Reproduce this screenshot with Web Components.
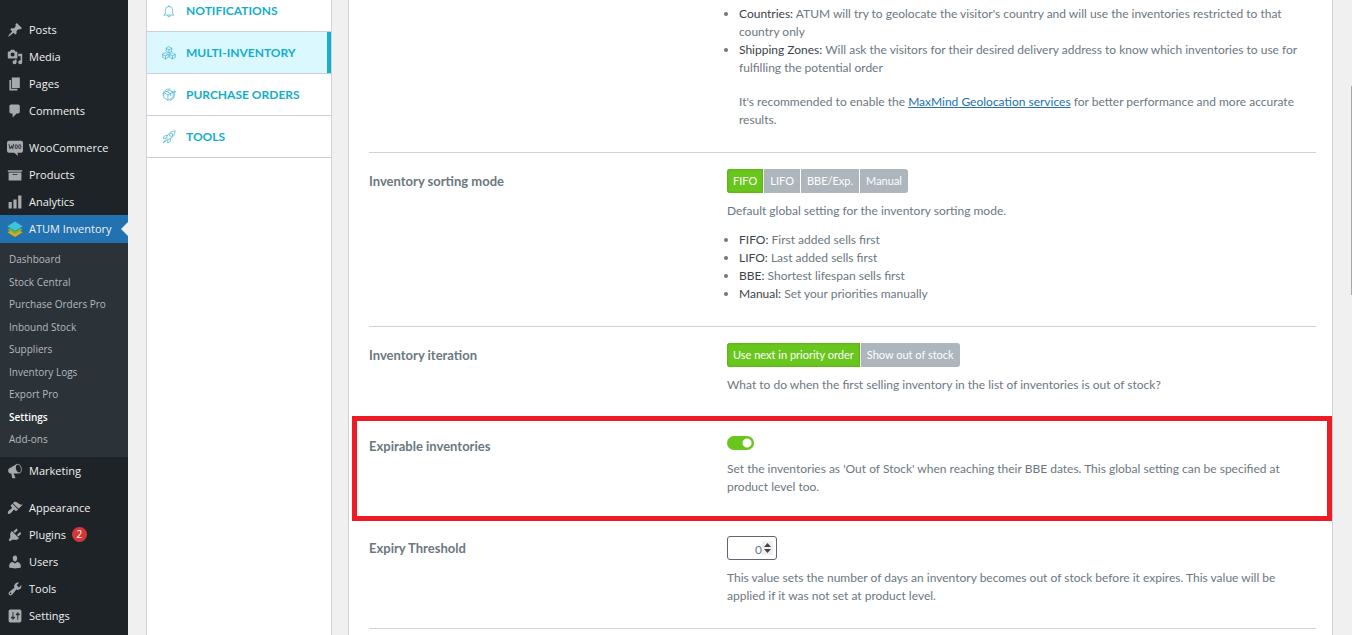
<!DOCTYPE html>
<html lang="en">
<head>
<meta charset="utf-8">
<meta name="viewport" content="width=device-width, initial-scale=1">
<title>ATUM Inventory Settings</title>
<style>
  body { margin: 0; font-family: Lato, "Noto Sans", sans-serif; font-size: 12px; line-height: 18px; color: #6c7781; background: #f0f0f1; }
  strong { font-weight: 400; color: #3c434a; }
  a { color: #2271b1; }
  input::-webkit-inner-spin-button { display: none; }
</style>
</head>
<body>
<atum-app>
  <wp-menu slot="menu">
    <wp-menu-item icon="post">Posts</wp-menu-item>
    <wp-menu-item icon="media">Media</wp-menu-item>
    <wp-menu-item icon="page">Pages</wp-menu-item>
    <wp-menu-item icon="comment">Comments</wp-menu-item>
    <wp-menu-gap></wp-menu-gap>
    <wp-menu-item icon="woo">WooCommerce</wp-menu-item>
    <wp-menu-item icon="archive">Products</wp-menu-item>
    <wp-menu-item icon="chart">Analytics</wp-menu-item>
    <wp-menu-item icon="atum" current>ATUM Inventory</wp-menu-item>
    <wp-submenu items="Dashboard,Stock Central,Purchase Orders Pro,Inbound Stock,Suppliers,Inventory Logs,Export Pro,Settings,Add-ons" current="Settings"></wp-submenu>
    <wp-menu-item icon="megaphone">Marketing</wp-menu-item>
    <wp-menu-gap></wp-menu-gap>
    <wp-menu-item icon="appearance">Appearance</wp-menu-item>
    <wp-menu-item icon="plugins" count="2">Plugins</wp-menu-item>
    <wp-menu-item icon="users">Users</wp-menu-item>
    <wp-menu-item icon="tools">Tools</wp-menu-item>
    <wp-menu-item icon="settings">Settings</wp-menu-item>
  </wp-menu>

  <atum-nav slot="nav">
    <atum-nav-item icon="bell">NOTIFICATIONS</atum-nav-item>
    <atum-nav-item icon="cubes" active>MULTI-INVENTORY</atum-nav-item>
    <atum-nav-item icon="box">PURCHASE ORDERS</atum-nav-item>
    <atum-nav-item icon="rocket">TOOLS</atum-nav-item>
  </atum-nav>

  <atum-setting continued>
    <atum-list>
      <li><strong>Countries:</strong> ATUM will try to geolocate the visitor's country and will use the inventories restricted to that country only</li>
      <li><strong>Shipping Zones:</strong> Will ask the visitors for their desired delivery address to know which inventories to use for fulfilling the potential order
        <atum-note>It's recommended to enable the <a href="#maxmind">MaxMind Geolocation services</a> for better performance and more accurate results.</atum-note></li>
    </atum-list>
  </atum-setting>

  <atum-setting>
    <span slot="label">Inventory sorting mode</span>
    <atum-choice slot="control" label="Inventory sorting mode" options="FIFO,LIFO,BBE/Exp.,Manual" value="FIFO"></atum-choice>
    Default global setting for the inventory sorting mode.
    <atum-list spaced>
      <li><strong>FIFO:</strong> First added sells first</li>
      <li><strong>LIFO:</strong> Last added sells first</li>
      <li><strong>BBE:</strong> Shortest lifespan sells first</li>
      <li><strong>Manual:</strong> Set your priorities manually</li>
    </atum-list>
  </atum-setting>

  <atum-setting>
    <span slot="label">Inventory iteration</span>
    <atum-choice slot="control" label="Inventory iteration" options="Use next in priority order,Show out of stock" value="Use next in priority order"></atum-choice>
    What to do when the first selling inventory in the list of inventories is out of stock?
  </atum-setting>

  <atum-setting highlighted>
    <label slot="label" for="expirable">Expirable inventories</label>
    <atum-switch slot="control"><input type="checkbox" role="switch" id="expirable" checked></atum-switch>
    Set the inventories as 'Out of Stock' when reaching their BBE dates. This global setting can be specified at product level too.
  </atum-setting>

  <atum-setting>
    <label slot="label" for="threshold">Expiry Threshold</label>
    <atum-number slot="control"><input type="number" id="threshold" value="0" min="0"></atum-number>
    This value sets the number of days an inventory becomes out of stock before it expires. This value will be applied if it was not set at product level.
  </atum-setting>
</atum-app>

<script>
const define = (name, render) => customElements.define(name, class extends HTMLElement {
  connectedCallback() {
    if (this.shadowRoot) return;
    this.attachShadow({ mode: 'open' }).innerHTML = render(this);
  }
});

const ICONS = {
  post: '<path d="M10.44 3.02l1.82-1.82 6.36 6.35-1.83 1.82c-1.05-.68-2.48-.57-3.41.36l-.75.75c-.92.93-1.04 2.35-.35 3.41l-1.83 1.82-2.41-2.41-2.8 2.79c-.42.42-3.38 2.71-3.8 2.29s1.86-3.39 2.28-3.81l2.79-2.79L4.1 9.36l1.83-1.82c1.05.69 2.48.57 3.4-.36l.75-.75c.93-.92 1.05-2.35.36-3.41z"/>',
  media: '<path fill-rule="evenodd" d="M13 11V4c0-.55-.45-1-1-1h-1.67L9 1H5L3.67 3H2c-.55 0-1 .45-1 1v7c0 .55.45 1 1 1h10c.55 0 1-.45 1-1zM7 4.5c1.38 0 2.5 1.12 2.5 2.5S8.38 9.5 7 9.5 4.5 8.38 4.5 7 5.62 4.5 7 4.5zM14 6h5v10.5c0 1.38-1.12 2.5-2.5 2.5S14 17.88 14 16.5s1.12-2.5 2.5-2.5c.17 0 .34.02.5.05V9h-3V6zm-4 8.05V13h2v3.5c0 1.38-1.12 2.5-2.5 2.5S7 17.88 7 16.5 8.12 14 9.5 14c.17 0 .34.02.5.05z"/>',
  page: '<path d="M6 15V2h10v13H6zm-1 1h8v2H3V5h2v11z"/>',
  comment: '<path d="M5 2h9c1.1 0 2 .9 2 2v7c0 1.1-.9 2-2 2h-2l-5 5v-5H5c-1.1 0-2-.9-2-2V4c0-1.1.9-2 2-2z"/>',
  woo: '<path d="M2.5 1h15A2.5 2.5 0 0 1 20 3.500v10a2.500 2.500 0 0 1-2.500 2.500H13l1 4-5-4H2.500A2.500 2.500 0 0 1 0 13.500v-10A2.500 2.500 0 0 1 2.500 1z"/><g fill="none" stroke="#3a4046" stroke-width="1.300" stroke-linecap="round" stroke-linejoin="round"><path d="M2.500 5.500l1.300 5.500 2-3.800 1.300 3.800 1.100-5.500"/><ellipse cx="11.500" cy="8.300" rx="1.400" ry="2.400"/><ellipse cx="16" cy="8.300" rx="1.400" ry="2.400"/></g>',
  archive: '<path fill-rule="evenodd" d="M19 4v2H1V4h18zM2 7h16v10H2V7zm11 3V9H7v1h6z"/>',
  chart: '<path d="M18 18V2h-4v16h4zm-6 0V7H8v11h4zm-6 0v-8H2v8h4z"/>',
  atum: '<path fill="#e8a317" d="M.500 14l9.500-5 9.500 5L10 20z"/><path fill="#76b82a" d="M.500 10.500l9.500-5 9.500 5L10 16.500z"/><path fill="#1d8fb5" d="M.500 6.500L10 12.300l9.500-5.800v1L10 13.500.500 7.500z"/><path fill="#3fc3dc" d="M.500 6.500L10 .5l9.500 6L10 12.300z"/>',
  megaphone: '<path fill-rule="evenodd" d="M18.15 5.94c.46 1.62.38 3.22-.02 4.48-.42 1.28-1.26 2.18-2.3 2.480-.16.06-.26.06-.4.06-.06.02-.12.02-.18.02-.06.02-.14.02-.22.02h-6.8l2.220 5.500c.02.14-.06.26-.14.34-.08.1-.24.16-.34.16H6.950c-.1 0-.26-.06-.34-.16-.08-.08-.16-.2-.14-.34l-1-5.500H4.250l-.02-.02c-.5.06-1.080-.18-1.540-.62s-.88-1.080-1.060-1.880c-.24-.8-.2-1.560-.02-2.200.18-.62.58-1.080 1.060-1.300l.02-.02 9-5.400c.1-.06.18-.1.24-.16.06-.04.14-.08.24-.12.16-.08.28-.12.5-.18 1.040-.3 2.240.1 3.220.98s1.840 2.240 2.260 3.860zm-2.580 5.980h-.02c.4-.1.74-.34 1.040-.7.58-.7.86-1.760.86-3.040 0-.64-.1-1.300-.28-1.980-.34-1.360-1.020-2.500-1.780-3.240s-1.680-1.100-2.460-.88c-.82.22-1.400.96-1.700 2-.32 1.040-.28 2.360.06 3.720.38 1.360 1 2.500 1.800 3.240.78.740 1.620 1.100 2.480.88z"/>',
  appearance: '<path d="M14.480 11.060L7.410 3.990l1.500-1.500c.5-.56 2.300-.47 3.510.32 1.210.8 1.430 1.280 2.910 2.100 1.180.64 2.450 1.260 4.450.85zm-.71.71L6.700 4.700 4.930 6.470c-.39.39-.39 1.020 0 1.410l1.060 1.060c.39.39.39 1.030 0 1.420-.6.6-1.430 1.110-2.210 1.690-.35.26-.7.53-1.010.84C1.430 14.230.4 16.080 1.400 17.070c.99 1 2.840-.03 4.180-1.360.31-.31.58-.66.85-1.020.57-.78 1.080-1.610 1.690-2.210.39-.39 1.020-.39 1.410 0l1.060 1.060c.39.39 1.020.39 1.410 0z"/>',
  plugins: '<path d="M13.110 4.360L9.870 7.600 8 5.730l3.240-3.240c.35-.34 1.050-.2 1.560.32.52.51.66 1.210.31 1.550zm-8 1.770l.91-1.120 9.010 9.010-1.190.84c-.71.71-2.630 1.160-3.820 1.160H6.140L4.900 17.260c-.59.59-1.540.59-2.120 0-.59-.58-.59-1.530 0-2.120l1.240-1.240v-3.880c0-1.130.4-3.190 1.090-3.890zm7.260 3.970l3.240-3.240c.34-.35 1.040-.21 1.550.31.52.51.66 1.210.31 1.550l-3.240 3.250z"/>',
  users: '<path d="M10 9.250c-2.270 0-2.730-3.440-2.730-3.440C7 4.020 7.820 2 9.970 2c2.160 0 2.980 2.020 2.710 3.810 0 0-.41 3.440-2.680 3.440zm0 2.570L12.720 10c2.390 0 4.520 2.330 4.520 4.530v2.490s-3.650 1.130-7.240 1.130c-3.650 0-7.240-1.130-7.240-1.130v-2.490c0-2.250 1.940-4.480 4.470-4.480z"/>',
  tools: '<path fill-rule="evenodd" d="M16.680 9.770c-1.340 1.340-3.300 1.670-4.950.99l-5.410 6.520c-.99.99-2.590.99-3.580 0s-.99-2.590 0-3.570l6.520-5.420c-.68-1.650-.35-3.610.99-4.950 1.280-1.280 3.120-1.620 4.720-1.060l-2.890 2.890 2.820 2.820 2.860-2.870c.53 1.580.18 3.390-1.080 4.650zM3.810 16.210c.4.39 1.040.39 1.430 0 .4-.4.4-1.040 0-1.430-.39-.4-1.030-.4-1.430 0-.39.39-.39 1.030 0 1.430z"/>',
  settings: '<path fill-rule="evenodd" d="M18 16V4c0-1.100-.9-2-2-2H4c-1.100 0-2 .9-2 2v12c0 1.100.9 2 2 2h12c1.100 0 2-.9 2-2zM8 11h1c.55 0 1 .45 1 1s-.45 1-1 1H8v1.500c0 .28-.22.5-.5.5s-.5-.22-.5-.5V13H6c-.55 0-1-.45-1-1s.45-1 1-1h1V5.500c0-.28.22-.5.5-.5s.5.22.5.5V11zm5-2h-1c-.55 0-1-.45-1-1s.45-1 1-1h1V5.500c0-.28.22-.5.5-.5s.5.22.5.5V7h1c.55 0 1 .45 1 1s-.45 1-1 1h-1v5.500c0 .28-.22.5-.5.5s-.5-.22-.5-.5V9z"/>',
  bell: '<g class="line"><path d="M10 1.800v1.700M4.800 13.500V8.700a5.200 5.200 0 0 1 10.400 0v4.800l2 2.300H2.800zM8 16.500a2 2 0 0 0 4 0"/></g>',
  cubes: '<g class="line"><path d="M10 1.200l4 2.200v4.200l-4 2.200-4-2.200V3.400zM6 3.400l4 2.200 4-2.200M10 5.600v4.200M5 9.800l4 2.200v4.200l-4 2.200-4-2.200V12zM1 12l4 2.200L9 12M5 14.200v4.200M15 9.800l4 2.200v4.200l-4 2.200-4-2.200V12zM11 12l4 2.200 4-2.200M15 14.200v4.200"/></g>',
  box: '<g class="line"><path d="M3 6.500L11 3l5 3v7.500L8.500 17.500 3 14zM3 6.500L8.500 10 16 6M8.500 10v7.500M6.500 5l6 3v3M1.500 10C1.500 4 6.500.8 11.500 1.500M18 8.500c.5 4-2 8-6 9.300M13.500 5.500h5.500M17 3.500l2 2-2 2"/></g>',
  rocket: '<g class="line"><path d="M6.500 11C8.500 5.500 12 1.500 18.700 1.300 18.500 8 14.500 11.500 9 13.500zM7.800 7.800L3.500 8.500 1.500 12l4.700-.3M12.200 12.200L11.500 16.500 8 18.500l.3-4.700M5.500 13.500L1.500 18.500l5-3.500"/><circle cx="13" cy="7" r="2.200"/></g>'
};

define('wp-icon', el => `<style>
  :host { display: block; width: 16px; height: 16px; flex: none; }
  svg { display: block; width: 100%; height: 100%; fill: currentColor; overflow: visible; }
  .line { fill: none; stroke: currentColor; stroke-width: 1; stroke-linejoin: round; stroke-linecap: round; }
</style><svg viewBox="0 0 20 20" aria-hidden="true">${ICONS[el.getAttribute('name')]}</svg>`);

define('atum-app', () => `<style>
  :host { display: grid; grid-template-columns: 128px 1fr; min-height: 100vh; position: relative; overflow: hidden; }
  main { display: flex; gap: 16px; padding: 0 19px 0 18px; min-width: 0; }
  slot[name=nav] { display: block; flex: 0 0 186px; }
  .panel { flex: 1; min-width: 0; box-sizing: border-box; padding: 5px 16px 0 20px; background: #fff; border: solid #cfd2d6; border-width: 0 1px; }
  .thumb { position: absolute; right: 0; top: 13.5%; width: 1px; height: 33%; background: #a8a8a8; }
</style>
<slot name="menu"></slot>
<main><slot name="nav"></slot><div class="panel"><slot></slot></div></main>
<div class="thumb"></div>`);

define('wp-menu', () => `<style>
  :host { display: block; background: #1d2327; color: #f0f0f1; padding-top: 16px; font-family: "Open Sans", "Noto Sans", sans-serif; }
</style><nav aria-label="Main menu"><slot></slot></nav>`);

define('wp-menu-gap', () => `<style>:host { display: block; height: 10px; }</style>`);

define('wp-menu-item', el => `<style>
  :host { display: block; position: relative; }
  a { display: flex; align-items: center; gap: 6px; padding-left: 7px; font-size: 11px; line-height: 27px; color: inherit; text-decoration: none; }
  wp-icon { color: #a7aaad; }
  :host([current]) { background: #2271b1; }
  :host([current]) a { line-height: 28px; }
  :host([current])::after { content: ""; position: absolute; right: 0; top: 50%; margin-top: -7px; border: 7px solid transparent; border-right-color: #f0f0f1; border-left: 0; }
  .count { min-width: 15px; height: 15px; border-radius: 8px; background: #d63638; color: #fff; font-size: 10px; line-height: 15px; text-align: center; }
</style><a href="#"><wp-icon name="${el.getAttribute('icon')}"></wp-icon><span><slot></slot></span>${el.hasAttribute('count') ? `<span class="count">${el.getAttribute('count')}</span>` : ''}</a>`);

define('wp-submenu', el => `<style>
  :host { display: block; background: #2c3338; padding: 5px 0 6px; }
  ul { list-style: none; margin: 0; padding: 0; }
  a { display: block; padding-left: 9px; font-size: 10px; line-height: 22px; color: #b4b9be; text-decoration: none; }
  li:nth-child(odd) { padding-bottom: 1px; }
  .current { color: #fff; font-weight: 600; }
</style><ul>${el.getAttribute('items').split(',').map(t => `<li><a href="#"${t === el.getAttribute('current') ? ' class="current" aria-current="page"' : ''}>${t}</a></li>`).join('')}</ul>`);

define('atum-nav', () => `<style>
  :host { display: flow-root; box-sizing: border-box; height: 100%; background: #fff; border: solid #cfd2d6; border-width: 0 1px; }
  nav { margin-top: -10px; }
</style><nav aria-label="Settings sections"><slot></slot></nav>`);

define('atum-nav-item', el => `<style>
  :host { display: block; border-bottom: 1px solid #cbd0d8; }
  a { display: flex; align-items: center; gap: 10px; padding-left: 15px; font-size: 12px; font-weight: 700; line-height: 41px; color: #12aecb; text-decoration: none; }
  wp-icon { width: 14px; height: 14px; color: #3fb0d0; }
  :host([active]) { background: #dbf8ff; box-shadow: inset -4px 0 #12b0cc; }
</style><a href="#"><wp-icon name="${el.getAttribute('icon')}"></wp-icon><span><slot></slot></span></a>`);

define('atum-setting', el => `<style>
  :host { display: grid; grid-template-columns: 358px minmax(0, 1fr); position: relative; padding: 16px 0 23px; border-bottom: 1px solid #cfd2d9; }
  :host([continued]) { padding-top: 0; }
  :host([highlighted])::after { content: ""; position: absolute; inset: -2px -16px -2px -17px; border: 5px solid #ed1c24; pointer-events: none; }
  .label { font-size: 13px; line-height: 24px; font-weight: 700; color: #6b7880; }
  slot[name=control] { display: block; margin-bottom: 9px; }
</style>
<div class="label"><slot name="label"></slot></div>
<div>${el.hasAttribute('continued') ? '' : '<slot name="control"></slot>'}<slot></slot></div>`);

define('atum-list', () => `<style>
  :host { display: block; }
  :host([spaced]) { margin-top: 11px; }
  ul { margin: 0; padding-left: 12px; list-style: disc; }
  ::slotted(li) { list-style: disc; }
</style><ul><slot></slot></ul>`);

define('atum-note', () => `<style>:host { display: block; margin-top: 16px; }</style><slot></slot>`);

define('atum-choice', el => `<style>
  :host { display: block; }
  div { display: flex; gap: 1px; }
  button { border: 0; margin: 0; height: 24px; padding: 0 6px; font: inherit; font-size: 11px; line-height: 24px; color: #fff; background: #adb5bd; cursor: pointer; }
  button[aria-pressed=true] { background: #69c61d; box-shadow: inset 0 0 3px #4ea30c; }
  button:first-child { border-radius: 3px 0 0 3px; }
  button:last-child { border-radius: 0 3px 3px 0; }
</style><div role="group" aria-label="${el.getAttribute('label')}">${el.getAttribute('options').split(',').map(o => `<button type="button" aria-pressed="${o === el.getAttribute('value')}">${o}</button>`).join('')}</div>`);

define('atum-switch', () => `<style>
  :host { display: flex; padding: 2px 0 1px; }
  ::slotted(input) { appearance: none; display: block; margin: 0; width: 27px; height: 14px; border-radius: 7px; background: radial-gradient(circle at 20px 7px, #fff 4px, #69c61d 5px); }
</style><slot></slot>`);

define('atum-number', () => `<style>
  :host { display: block; position: relative; width: 50px; }
  ::slotted(input) { appearance: textfield; display: block; box-sizing: border-box; width: 100%; height: 24px; margin: 0; padding: 2px 14px 0 4px; border: 1px solid #5f6672; border-radius: 3px; background: #fff; color: #6c7781; font: 12px Lato, "Noto Sans", sans-serif; text-align: right; }
  svg { position: absolute; right: 4px; top: 5px; width: 11px; height: 14px; background: #efefef; pointer-events: none; }
</style><slot></slot><svg viewBox="0 0 11 14" aria-hidden="true"><path fill="#444" d="M5.500 2L9 6H2zM5.500 12L9 8H2z"/></svg>`);
</script>
</body>
</html>
